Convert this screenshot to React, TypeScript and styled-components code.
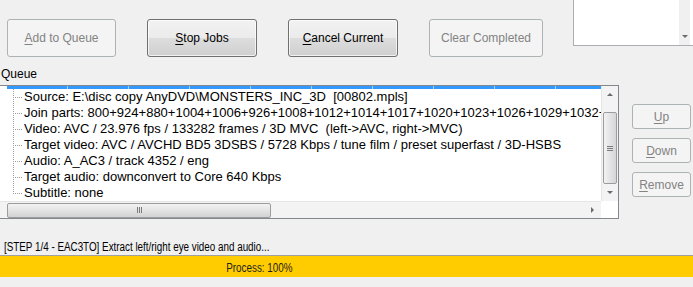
import React from "react";
import styled, { createGlobalStyle, css } from "styled-components";

const GlobalStyle = createGlobalStyle`
  html, body {
    margin: 0;
    padding: 0;
    background: #f0f0f0;
    overflow: hidden;
  }
`;

const Window = styled.div`
  width: 693px;
  height: 287px;
  overflow: hidden;
  display: flex;
  flex-direction: column;
  background: #f0f0f0;
  font-family: "Liberation Sans", Arial, sans-serif;
  color: #000;
`;

const TopBar = styled.div`
  height: 64px;
  display: flex;
  align-items: flex-start;
  padding-left: 7px;
  gap: 31px;
`;

const Button = styled.button<{ $w: number; $h: number }>`
  box-sizing: border-box;
  flex: none;
  width: ${(p) => p.$w}px;
  height: ${(p) => p.$h}px;
  padding: 0;
  border-radius: 3px;
  font-family: "Liberation Sans", Arial, sans-serif;
  font-size: 12px;
  display: flex;
  align-items: center;
  justify-content: center;
  border: 1px solid #707070;
  color: #000;
  background: linear-gradient(to bottom, #f2f2f2 0%, #ebebeb 50%, #dddddd 51%, #cfcfcf 100%);
  box-shadow: inset 0 0 0 1px rgba(255, 255, 255, 0.7);
  u {
    text-decoration: underline;
    text-underline-offset: 2px;
  }
  &:disabled {
    border-color: #adb2b5;
    color: #838383;
    background: #f4f4f4;
    box-shadow: none;
  }
`;

const TopButton = styled(Button)`
  margin-top: 19px;
`;

const Memo = styled.div`
  box-sizing: border-box;
  flex: none;
  margin-top: -2px;
  margin-left: -1px;
  width: 130px;
  height: 48px;
  border: 1px solid #abadb3;
  background: #fff;
  display: flex;
  justify-content: flex-end;
  padding-right: 12px;
`;

const MemoScroll = styled.div`
  width: 11px;
  height: 100%;
  background: #f0f0f0;
  display: flex;
  flex-direction: column;
  justify-content: flex-end;
  align-items: center;
  padding-bottom: 7px;
  box-sizing: border-box;
`;

const Arrow = styled.span<{ $dir: "up" | "down" | "right" }>`
  width: 0;
  height: 0;
  ${(p) =>
    p.$dir === "up" &&
    css`
      border-left: 3px solid transparent;
      border-right: 3px solid transparent;
      border-bottom: 3px solid #6b6b6b;
    `}
  ${(p) =>
    p.$dir === "down" &&
    css`
      border-left: 3px solid transparent;
      border-right: 3px solid transparent;
      border-top: 3px solid #6b6b6b;
    `}
  ${(p) =>
    p.$dir === "right" &&
    css`
      border-top: 3px solid transparent;
      border-bottom: 3px solid transparent;
      border-left: 3px solid #6b6b6b;
    `}
`;

const QueueLabel = styled.div`
  height: 21px;
  line-height: 21px;
  font-size: 12px;
  padding-left: 1px;
`;

const QueueArea = styled.div`
  display: flex;
  align-items: flex-start;
`;

const ListBox = styled.div`
  box-sizing: border-box;
  flex: none;
  margin-left: -11px;
  width: 630px;
  height: 134px;
  border: 1px solid #828790;
  background: #fff;
  display: grid;
  grid-template-columns: 1fr 17px;
  grid-template-rows: 1fr 17px;
`;

const ListContent = styled.div`
  overflow: hidden;
  white-space: nowrap;
`;

const Selection = styled.div`
  margin-left: 17px;
  height: 3px;
  background: repeating-linear-gradient(to right, #3399ff 0 60px, #a9d1fb 60px 61px);
`;

const Row = styled.div`
  height: 16px;
  display: flex;
  align-items: center;
  font-size: 13px;
  line-height: 16px;
`;

const Guide = styled.span<{ $last?: boolean }>`
  flex: none;
  width: 10px;
  height: 16px;
  margin-left: 23px;
  margin-right: 1px;
  background-image: repeating-linear-gradient(to bottom, #a0a0a0 0 1px, transparent 1px 2px),
    repeating-linear-gradient(to right, #a0a0a0 0 1px, transparent 1px 2px);
  background-repeat: no-repeat;
  background-position: 0 0, 0 8px;
  background-size: 1px ${(p) => (p.$last ? "9px" : "16px")}, 10px 1px;
`;

const VScroll = styled.div`
  background: #f3f3f3;
  border-left: 1px solid #e6e6e6;
  display: flex;
  flex-direction: column;
  align-items: center;
`;

const ArrowCell = styled.div`
  height: 17px;
  width: 100%;
  display: flex;
  align-items: center;
  justify-content: center;
  flex: none;
`;

const VThumb = styled.div`
  box-sizing: border-box;
  margin-top: 9px;
  width: 14px;
  height: 72px;
  border: 1px solid #9c9c9c;
  border-radius: 2px;
  background: linear-gradient(to right, #f3f3f3, #e3e3e3 50%, #d6d6d6);
  display: flex;
  flex-direction: column;
  align-items: center;
  justify-content: center;
  gap: 1px;
  margin-bottom: auto;
`;

const GripH = styled.span`
  width: 6px;
  height: 1px;
  background: #7a7a7a;
`;

const HScroll = styled.div`
  background: #f3f3f3;
  border-top: 1px solid #e6e6e6;
  display: flex;
  align-items: center;
`;

const HThumb = styled.div`
  box-sizing: border-box;
  margin-left: 17px;
  width: 264px;
  height: 15px;
  border: 1px solid #9c9c9c;
  border-radius: 2px;
  background: linear-gradient(to bottom, #f3f3f3, #e3e3e3 50%, #d2d2d2);
  display: flex;
  align-items: center;
  justify-content: center;
  gap: 1px;
`;

const GripV = styled.span`
  width: 1px;
  height: 6px;
  background: #7a7a7a;
`;

const HArrowCell = styled.div`
  margin-left: auto;
  width: 17px;
  display: flex;
  justify-content: center;
`;

const Corner = styled.div`
  background: #fff;
`;

const SideButtons = styled.div`
  margin-left: 13px;
  margin-top: 19px;
  display: flex;
  flex-direction: column;
  gap: 9px;
`;

// narrow system font look: Arial glyphs squeezed horizontally
const Narrow = styled.span<{ $origin: string }>`
  display: inline-block;
  white-space: nowrap;
  font-family: "Liberation Sans", Arial, sans-serif;
  font-size: 12px;
  transform: scaleX(0.82);
  transform-origin: ${(p) => p.$origin};
`;

const StatusText = styled.div`
  margin-top: 17px;
  height: 19px;
  line-height: 19px;
  padding-left: 4px;
`;

const ProgressBar = styled.div`
  border-top: 1px solid #a0a0a0;
  height: 21px;
  background: #ffcc00;
  display: flex;
  align-items: center;
`;

const ProgressLabel = styled.div`
  width: 519px;
  text-align: center;
  color: #222;
`;

const details = [
  "Source: E:\\disc copy AnyDVD\\MONSTERS_INC_3D\u00a0\u00a0[00802.mpls]",
  "Join parts: 800+924+880+1004+1006+926+1008+1012+1014+1017+1020+1023+1026+1029+1032+1035",
  "Video: AVC / 23.976 fps / 133282 frames / 3D MVC\u00a0\u00a0(left->AVC, right->MVC)",
  "Target video: AVC / AVCHD BD5 3DSBS / 5728 Kbps / tune film / preset superfast / 3D-HSBS",
  "Audio: A_AC3 / track 4352 / eng",
  "Target audio: downconvert to Core 640 Kbps",
  "Subtitle: none",
];

export default function App() {
  return (
    <>
      <GlobalStyle />
      <Window>
        <TopBar>
          <TopButton $w={109} $h={38} disabled>
            <span>
              <u>A</u>dd to Queue
            </span>
          </TopButton>
          <TopButton $w={110} $h={38}>
            <span>
              <u>S</u>top Jobs
            </span>
          </TopButton>
          <TopButton $w={110} $h={38}>
            <span>
              <u>C</u>ancel Current
            </span>
          </TopButton>
          <TopButton $w={114} $h={38} disabled>
            Clear Completed
          </TopButton>
          <Memo>
            <MemoScroll>
              <Arrow $dir="down" />
            </MemoScroll>
          </Memo>
        </TopBar>
        <QueueLabel>Queue</QueueLabel>
        <QueueArea>
          <ListBox>
            <ListContent>
              <Selection />
              {details.map((d, i) => (
                <Row key={i}>
                  <Guide $last={i === details.length - 1} />
                  {d}
                </Row>
              ))}
            </ListContent>
            <VScroll>
              <ArrowCell>
                <Arrow $dir="up" />
              </ArrowCell>
              <VThumb>
                <GripH />
                <GripH />
                <GripH />
              </VThumb>
              <ArrowCell>
                <Arrow $dir="down" />
              </ArrowCell>
            </VScroll>
            <HScroll>
              <HThumb>
                <GripV />
                <GripV />
                <GripV />
              </HThumb>
              <HArrowCell>
                <Arrow $dir="right" />
              </HArrowCell>
            </HScroll>
            <Corner />
          </ListBox>
          <SideButtons>
            <Button $w={59} $h={25} disabled>
              <span>
                <u>U</u>p
              </span>
            </Button>
            <Button $w={59} $h={25} disabled>
              <span>
                <u>D</u>own
              </span>
            </Button>
            <Button $w={59} $h={25} disabled>
              <span>
                <u>R</u>emove
              </span>
            </Button>
          </SideButtons>
        </QueueArea>
        <StatusText>
          <Narrow $origin="left center">
            [STEP 1/4 - EAC3TO] Extract left/right eye video and audio...
          </Narrow>
        </StatusText>
        <ProgressBar>
          <ProgressLabel>
            <Narrow $origin="center">Process: 100%</Narrow>
          </ProgressLabel>
        </ProgressBar>
      </Window>
    </>
  );
}
